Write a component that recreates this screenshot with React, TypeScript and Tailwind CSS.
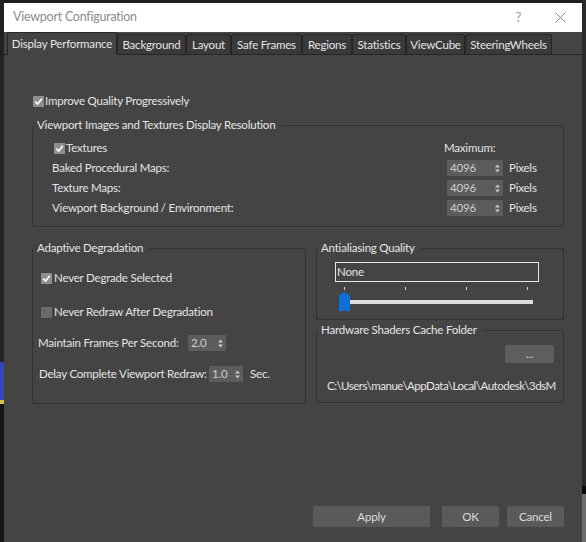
import type { ReactNode } from "react";

function Check({ checked }: { checked: boolean }) {
  return (
    <span
      className={`flex h-[11px] w-[11px] shrink-0 items-center justify-center ${
        checked ? "bg-[#8e8e8e]" : "bg-[#6a6a6a]"
      }`}
    >
      {checked && (
        <svg width="9" height="9" viewBox="0 0 9 9">
          <path d="M1.2 4.6 L3.6 7 L7.8 1.8" fill="none" stroke="#ffffff" strokeWidth="1.7" />
        </svg>
      )}
    </span>
  );
}

function Arrows() {
  return (
    <svg width="5" height="9" viewBox="0 0 5 9" className="shrink-0">
      <path d="M0 3.5 L2.5 0.5 L5 3.5 Z" fill="#c4c4c4" />
      <path d="M0 5.5 L2.5 8.5 L5 5.5 Z" fill="#c4c4c4" />
    </svg>
  );
}

function Spinner({ value, className }: { value: string; className: string }) {
  return (
    <div className={`flex h-[16px] shrink-0 items-center bg-[#5c5c5c] pl-[3px] pr-[3px] text-[#cdcdcd] ${className}`}>
      <span className="flex-1 leading-[16px]">{value}</span>
      <Arrows />
    </div>
  );
}

function Group({ title, className, children }: { title: string; className: string; children: ReactNode }) {
  return (
    <fieldset className={`min-w-0 shrink-0 rounded-[2px] border border-[#323232] ${className}`}>
      <legend className="whitespace-nowrap pl-[4px] pr-[6px] leading-[16px] text-[#e6e6e6]">{title}</legend>
      {children}
    </fieldset>
  );
}

const tabs = [
  { label: "Background", w: "w-[69px]" },
  { label: "Layout", w: "w-[45px]" },
  { label: "Safe Frames", w: "w-[71px]" },
  { label: "Regions", w: "w-[50px]" },
  { label: "Statistics", w: "w-[54px]" },
  { label: "ViewCube", w: "w-[59px]" },
  { label: "SteeringWheels", w: "w-[87px]" },
];

const resRows = ["Baked Procedural Maps:", "Texture Maps:", "Viewport Background / Environment:"];

export default function App() {
  return (
    <div className="flex h-[542px] w-[586px] overflow-hidden whitespace-nowrap bg-[#1d1d1d] font-['Lato',sans-serif] text-[11.5px] tracking-[-0.2px] text-[#e4e4e4]">
      {/* left edge of the desktop behind the dialog */}
      <div className="flex w-[4px] shrink-0 flex-col">
        <div className="h-[362px] bg-[#222222]" />
        <div className="h-[38px] bg-[#3446b8]" />
        <div className="h-[4px] bg-[#d8c24a]" />
        <div className="flex-1 bg-[#141414]" />
      </div>

      <div className="mt-[3px] flex h-[539px] w-[578px] shrink-0 flex-col bg-[#444444]">
        {/* title bar */}
        <div className="flex h-[29px] shrink-0 items-center bg-white pl-[9px] text-[12.5px] tracking-[-0.25px] text-[#8c8c8c]">
          <span className="flex-1">Viewport Configuration</span>
          <span className="mr-[34px] text-[13px] text-[#9a9a9a]">?</span>
          <svg width="11" height="11" viewBox="0 0 11 11" className="mr-[16px]">
            <path d="M0.5 0.5 L10.5 10.5 M10.5 0.5 L0.5 10.5" stroke="#8a8a8a" strokeWidth="1" />
          </svg>
        </div>

        {/* tabs */}
        <div className="flex h-[23px] shrink-0 items-end border-b border-[#262626] pl-[3px]">
          <div className="relative z-10 -mb-px flex h-[23px] w-[110px] shrink-0 items-center justify-center rounded-t-[3px] border border-b-0 border-[#262626] bg-[#444444] pb-[1px]">
            Display Performance
          </div>
          {tabs.map((t) => (
            <div
              key={t.label}
              className={`flex h-[20px] shrink-0 items-center justify-center rounded-t-[3px] border border-b-0 border-[#262626] bg-[#3a3a3a] ${t.w}`}
            >
              {t.label}
            </div>
          ))}
        </div>

        {/* page */}
        <div className="flex flex-1 flex-col pl-[28px] pr-[18px]">
          <div className="mt-[38px] flex h-[16px] items-center gap-[1px] pl-[1px]">
            <Check checked />
            <span>Improve Quality Progressively</span>
          </div>

          <Group title="Viewport Images and Textures Display Resolution" className="mt-[8px] w-[532px]">
            <div className="pb-[8px] pl-[19px] pr-[6px] pt-[5px]">
              <div className="flex h-[20px] items-center">
                <div className="flex flex-1 items-center gap-[1px] pl-[2px]">
                  <Check checked />
                  <span>Textures</span>
                </div>
                <div className="w-[110px] -translate-x-[3px]">Maximum:</div>
              </div>
              {resRows.map((r) => (
                <div key={r} className="flex h-[20px] items-center">
                  <span className="flex-1">{r}</span>
                  <div className="flex w-[110px] items-center">
                    <Spinner value="4096" className="w-[56px]" />
                    <span className="ml-[6px]">Pixels</span>
                  </div>
                </div>
              ))}
            </div>
          </Group>

          <div className="mt-[13px] flex gap-[10px]">
            <Group title="Adaptive Degradation" className="w-[274px]">
              <div className="pb-[19px] pl-[5px] pt-[12px]">
                <div className="flex h-[20px] items-center gap-[2px] pl-[3px]">
                  <Check checked />
                  <span>Never Degrade Selected</span>
                </div>
                <div className="mt-[14px] flex h-[20px] items-center gap-[2px] pl-[3px]">
                  <Check checked={false} />
                  <span>Never Redraw After Degradation</span>
                </div>
                <div className="mt-[11px] flex h-[20px] items-center">
                  <span className="w-[150px] shrink-0">Maintain Frames Per Second:</span>
                  <Spinner value="2.0" className="w-[38px]" />
                </div>
                <div className="mt-[11px] flex h-[20px] items-center pl-[1px]">
                  <span className="w-[170px] shrink-0">Delay Complete Viewport Redraw:</span>
                  <Spinner value="1.0" className="w-[34px]" />
                  <span className="ml-[7px]">Sec.</span>
                </div>
              </div>
            </Group>

            <div className="flex w-[248px] shrink-0 flex-col">
              <Group title="Antialiasing Quality" className="w-[248px]">
                <div className="pb-[8px] pl-[18px] pt-[6px]">
                  <div className="flex h-[20px] w-[204px] items-center border border-[#e6e6e6] pb-[1px] pl-[1px]">
                    None
                  </div>
                  <div className="relative ml-[4px] mt-[5px] h-[24px] w-[194px]">
                    <div className="flex h-[3px] justify-between px-[5px]">
                      <div className="w-px bg-[#cfcfcf]" />
                      <div className="w-px bg-[#cfcfcf]" />
                      <div className="w-px bg-[#cfcfcf]" />
                      <div className="w-px bg-[#cfcfcf]" />
                    </div>
                    <div className="mt-[10px] h-[4px] bg-[#dedede]" />
                    <svg width="11" height="19" viewBox="0 0 11 19" className="absolute left-0 top-[5px]">
                      <path d="M0 5 Q0 3 2 2 L5.5 0 L9 2 Q11 3 11 5 V19 H0 Z" fill="#0c6fd5" />
                    </svg>
                  </div>
                </div>
              </Group>

              <Group title="Hardware Shaders Cache Folder" className="mt-[2px] w-[248px]">
                <div className="pb-[8px] pl-[10px] pr-[7px] pt-[7px]">
                  <div className="flex justify-end pr-[2px]">
                    <div className="flex h-[18px] w-[49px] items-center justify-center rounded-[2px] bg-[#5e5e5e] text-[#d0d0d0]">
                      ...
                    </div>
                  </div>
                  <div className="mt-[15px] h-[16px] overflow-hidden leading-[16px] tracking-[-0.5px]">
                    C:\Users\manue\AppData\Local\Autodesk\3dsM
                  </div>
                </div>
              </Group>
            </div>
          </div>

          <div className="mb-[15px] mt-auto flex h-[21px] justify-end">
            <button className="h-[21px] w-[117px] rounded-[2px] bg-[#5a5a5a] text-[#dcdcdc]">Apply</button>
            <button className="ml-[12px] h-[21px] w-[57px] rounded-[2px] bg-[#5a5a5a] text-[#dcdcdc]">OK</button>
            <button className="ml-[8px] h-[21px] w-[57px] rounded-[2px] bg-[#5a5a5a] text-[#dcdcdc]">Cancel</button>
          </div>
        </div>
      </div>

      {/* right edge of the desktop */}
      <div className="flex w-[4px] shrink-0 flex-col">
        <div className="h-[486px] bg-[#2a2a2a]" />
        <div className="h-[8px] bg-[#0c0c0c]" />
        <div className="flex-1 bg-[#6e6e6e]" />
      </div>
    </div>
  );
}
